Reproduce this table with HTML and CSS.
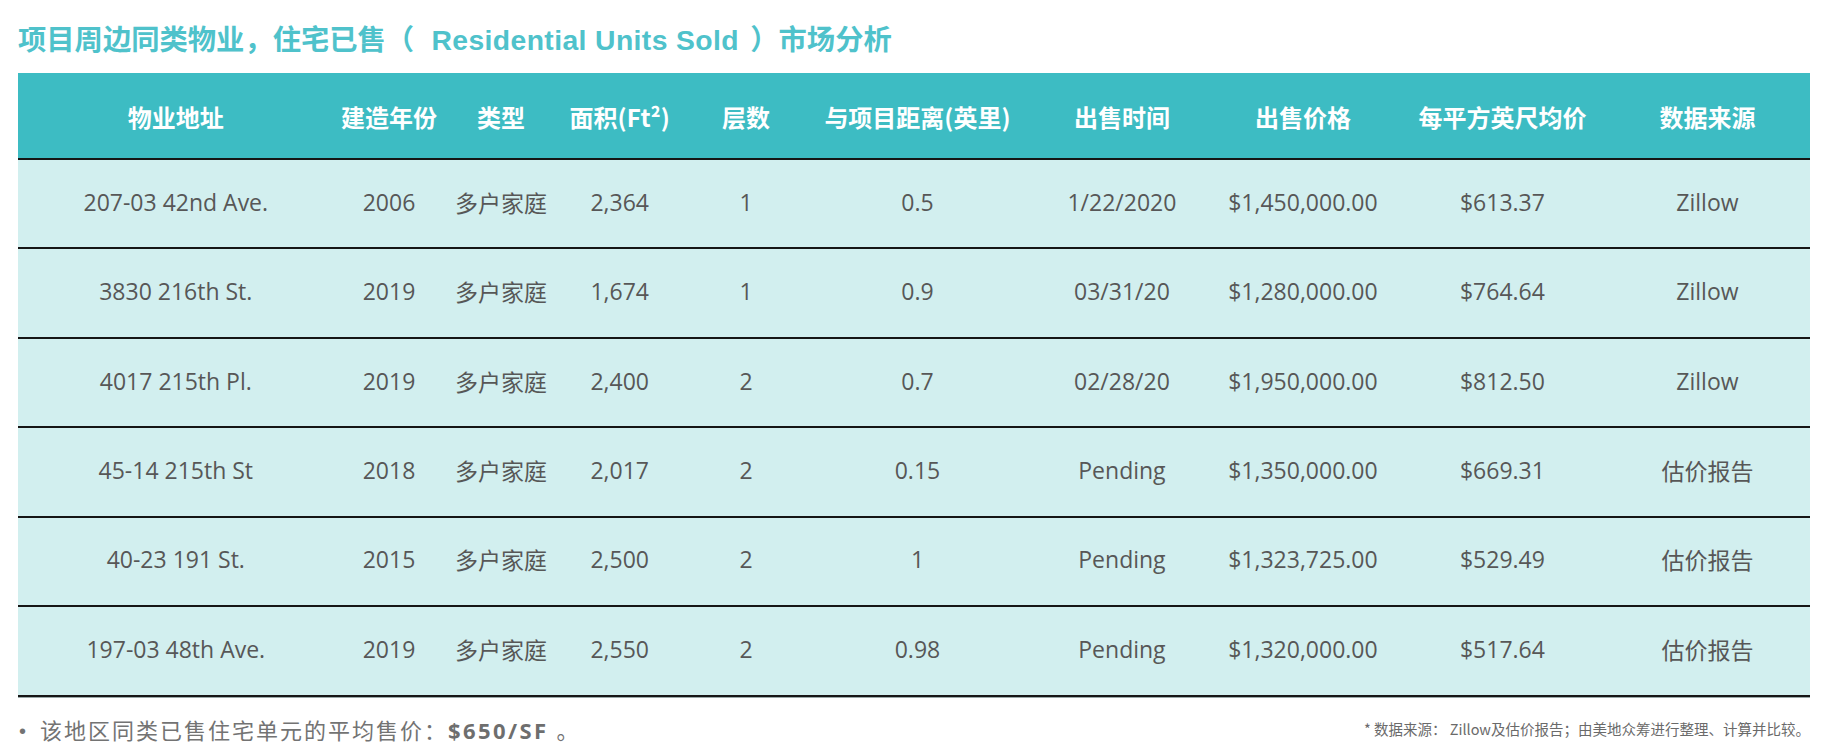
FILE: index.html
```html
<!DOCTYPE html>
<html lang="zh-CN">
<head>
<meta charset="utf-8">
<title>住宅已售市场分析</title>
<link rel="stylesheet" href="styles.css">
</head>
<body>
<div class="page">
  <h1 class="title">项目周边同类物业，住宅已售（<span class="en"> Residential Units Sold </span>）市场分析</h1>
  <div class="table">
    <div class="row head">
      <div class="cell">物业地址</div>
      <div class="cell">建造年份</div>
      <div class="cell">类型</div>
      <div class="cell">面积(Ft²)</div>
      <div class="cell">层数</div>
      <div class="cell">与项目距离(英里)</div>
      <div class="cell">出售时间</div>
      <div class="cell">出售价格</div>
      <div class="cell">每平方英尺均价</div>
      <div class="cell last">数据来源</div>
    </div>
    <div class="row">
      <div class="cell">207-03 42nd Ave.</div>
      <div class="cell">2006</div>
      <div class="cell">多户家庭</div>
      <div class="cell">2,364</div>
      <div class="cell">1</div>
      <div class="cell">0.5</div>
      <div class="cell">1/22/2020</div>
      <div class="cell">$1,450,000.00</div>
      <div class="cell">$613.37</div>
      <div class="cell last">Zillow</div>
    </div>
    <div class="row">
      <div class="cell">3830 216th St.</div>
      <div class="cell">2019</div>
      <div class="cell">多户家庭</div>
      <div class="cell">1,674</div>
      <div class="cell">1</div>
      <div class="cell">0.9</div>
      <div class="cell">03/31/20</div>
      <div class="cell">$1,280,000.00</div>
      <div class="cell">$764.64</div>
      <div class="cell last">Zillow</div>
    </div>
    <div class="row">
      <div class="cell">4017 215th Pl.</div>
      <div class="cell">2019</div>
      <div class="cell">多户家庭</div>
      <div class="cell">2,400</div>
      <div class="cell">2</div>
      <div class="cell">0.7</div>
      <div class="cell">02/28/20</div>
      <div class="cell">$1,950,000.00</div>
      <div class="cell">$812.50</div>
      <div class="cell last">Zillow</div>
    </div>
    <div class="row">
      <div class="cell">45-14 215th St</div>
      <div class="cell">2018</div>
      <div class="cell">多户家庭</div>
      <div class="cell">2,017</div>
      <div class="cell">2</div>
      <div class="cell">0.15</div>
      <div class="cell">Pending</div>
      <div class="cell">$1,350,000.00</div>
      <div class="cell">$669.31</div>
      <div class="cell last">估价报告</div>
    </div>
    <div class="row">
      <div class="cell">40-23 191 St.</div>
      <div class="cell">2015</div>
      <div class="cell">多户家庭</div>
      <div class="cell">2,500</div>
      <div class="cell">2</div>
      <div class="cell">1</div>
      <div class="cell">Pending</div>
      <div class="cell">$1,323,725.00</div>
      <div class="cell">$529.49</div>
      <div class="cell last">估价报告</div>
    </div>
    <div class="row">
      <div class="cell">197-03 48th Ave.</div>
      <div class="cell">2019</div>
      <div class="cell">多户家庭</div>
      <div class="cell">2,550</div>
      <div class="cell">2</div>
      <div class="cell">0.98</div>
      <div class="cell">Pending</div>
      <div class="cell">$1,320,000.00</div>
      <div class="cell">$517.64</div>
      <div class="cell last">估价报告</div>
    </div>
  </div>
  <div class="footer">
    <p class="summary"><span class="bullet">•</span>该地区同类已售住宅单元的平均售价：<b class="avg">$650/SF</b><span class="end">。</span></p>
    <p class="source">* 数据来源： Zillow及估价报告；由美地众筹进行整理、计算并比较。</p>
  </div>
</div>
</body>
</html>
```

FILE: styles.css
```css
html, body {
  margin: 0;
  padding: 0;
  background: #ffffff;
}

.page {
  width: 1792px;
  padding: 24px 19px 0 18px;
}

.title {
  margin: 0;
  font-family: "Liberation Sans", "Noto Sans CJK SC", sans-serif;
  font-weight: bold;
  font-size: 28.3px;
  line-height: 33px;
  color: #4fc2cb;
  white-space: nowrap;
}

.title .en {
  letter-spacing: 0.4px;
  padding: 0 3px 0 9px;
}

.table {
  margin-top: 16px;
  width: 1792px;
}

.row {
  display: grid;
  grid-template-columns: 315.6px 110.8px 113.2px 124.2px 128.4px 214.6px 194.4px 167.6px 231.4px 191.8px;
  align-items: center;
  box-sizing: border-box;
  height: 89.43px;
  background: #d2efef;
  border-bottom: 2px solid #161616;
  box-shadow: 0 1px 0 #9aa8a8;
  font-family: "Open Sans", "Noto Sans CJK SC", sans-serif;
  font-size: 23px;
  color: #575757;
}

.row.head {
  height: 87px;
  background: #3dbcc3;
  color: #ffffff;
  font-family: "Noto Sans CJK SC", sans-serif;
  font-weight: bold;
  font-size: 24px;
}

.cell {
  text-align: center;
  white-space: nowrap;
}

.cell.last {
  padding-right: 13.2px;
}

.row .cell {
  padding-bottom: 4px;
}

.row.head .cell {
  padding-bottom: 0;
  padding-top: 2px;
}

.footer {
  margin-top: 16px;
  display: flex;
  justify-content: space-between;
  align-items: center;
}

.summary {
  margin: 0;
  font-family: "Noto Sans CJK SC", sans-serif;
  font-size: 22px;
  letter-spacing: 2px;
  color: #737373;
  white-space: nowrap;
}

.bullet {
  display: inline-block;
  width: 21px;
  font-family: "Liberation Sans", sans-serif;
  font-size: 20px;
  letter-spacing: 0;
  margin-left: 1px;
  vertical-align: 1px;
}

.avg {
  font-family: "Open Sans", sans-serif;
  font-weight: bold;
  letter-spacing: 2.4px;
  color: #6e6e6e;
}

.end {
  margin-left: 8px;
}

.source {
  margin: 0;
  font-family: "Noto Sans CJK SC", sans-serif;
  font-size: 14.5px;
  color: #6a6a6a;
  white-space: nowrap;
}
```
